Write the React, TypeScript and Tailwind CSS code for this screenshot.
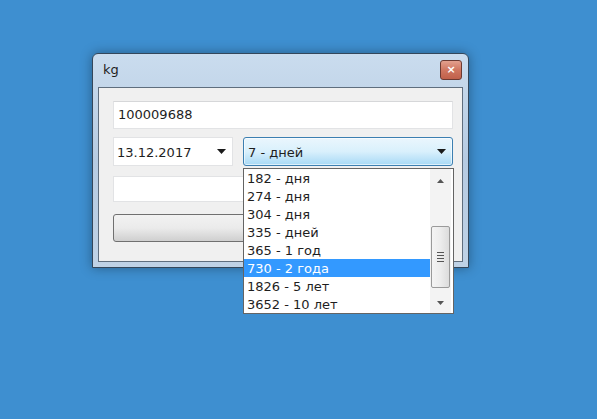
import React from 'react';

const items = [
  '182 - дня',
  '274 - дня',
  '304 - дня',
  '335 - дней',
  '365 - 1 год',
  '730 - 2 года',
  '1826 - 5 лет',
  '3652 - 10 лет',
];

function Arrow() {
  return (
    <svg width="9" height="5" viewBox="0 0 9 5">
      <path d="M0 0 L9 0 L4.5 5 Z" fill="#1a1a1a" />
    </svg>
  );
}

export default function App() {
  return (
    <div
      className="w-[597px] h-[419px] bg-[#3e8fd0] pt-[53px] pl-[92px] overflow-hidden"
      style={{ fontFamily: '"DejaVu Sans", "Noto Sans", sans-serif' }}
    >
      <div className="relative w-[377px] h-[215px] rounded-t-[6px] border border-[#34475b] bg-gradient-to-b from-[#cadcee] via-[#b6cbe2] to-[#bfd2e6] flex flex-col px-[5px] pb-[5px] shadow-[0_0_12px_rgba(0,0,0,0.35)]">
        {/* title bar */}
        <div className="h-[33px] flex items-center justify-between pl-[5px] pr-[1px]">
          <span className="text-[13px] text-[#1e1e1e] -mt-[2px]">kg</span>
          <div className="w-[22px] h-[20px] -mt-[2px] rounded-[3px] border border-[#6b3a32] bg-gradient-to-b from-[#e3a08e] via-[#cf7660] to-[#c0604a] flex items-center justify-center">
            <span className="text-[11px] font-bold text-white leading-none">×</span>
          </div>
        </div>
        {/* client area */}
        <div className="flex-1 border border-[#5f6e7e] bg-[#f0f0f0] pl-[14px] pr-[9px] pt-[13px] flex flex-col">
          <div className="h-[28px] bg-white border border-[#e2e3e5] border-t-[#d6d7d9] flex items-center pl-[4px] text-[13px] text-[#1e1e1e]">
            100009688
          </div>
          <div className="mt-[8px] flex gap-[10px]">
            <div className="w-[120px] h-[29px] bg-white border border-[#e2e3e5] flex items-center justify-between pl-[3px] pr-[6px] text-[13px] text-[#1e1e1e]">
              <span className="mt-[2px]">13.12.2017</span>
              <Arrow />
            </div>
            <div className="flex-1 h-[29px] rounded-[3px] border border-[#3c7fb1] bg-gradient-to-b from-[#eaf6fd] via-[#d9f0fc] to-[#a7d9f5] flex items-center justify-between pl-[4px] pr-[6px] text-[13px] text-[#1e1e1e] shadow-[inset_0_0_0_1px_rgba(255,255,255,0.6)]">
              <span className="mt-[2px]">7 - дней</span>
              <Arrow />
            </div>
          </div>
          <div className="mt-[10px] h-[26px] bg-white border border-[#e2e3e5]" />
          <div className="mt-[12px] h-[28px] rounded-[3px] border border-[#707070] bg-gradient-to-b from-[#f2f2f2] via-[#ebebeb] to-[#cfcfcf]" />
        </div>

        {/* dropdown list */}
        <div className="absolute left-[150px] top-[114px] w-[211px] h-[146px] bg-white border border-[#646464] flex pr-[2px]">
          <div className="flex-1 flex flex-col">
            {items.map((t) => (
              <div
                key={t}
                className={`h-[18px] flex items-center pl-[3px] text-[13px] leading-none ${
                  t === '730 - 2 года' ? 'bg-[#3399ff] text-white' : 'text-[#1e1e1e]'
                }`}
              >
                {t}
              </div>
            ))}
          </div>
          <div className="w-[21px] bg-[#f3f3f3] flex flex-col items-center">
            <div className="h-[24px] flex items-center justify-center">
              <svg width="7" height="4" viewBox="0 0 7 4">
                <path d="M0 4 L7 4 L3.5 0 Z" fill="#555" />
              </svg>
            </div>
            <div className="flex-1 w-full relative">
              <div className="absolute left-[1px] right-[1px] top-[33px] h-[62px] rounded-[2px] border border-[#9a9a9a] bg-gradient-to-r from-[#f4f4f4] via-[#ececec] to-[#dcdcdc] flex flex-col items-center justify-center gap-[2px]">
                <div className="w-[7px] h-[1px] bg-[#555]" />
                <div className="w-[7px] h-[1px] bg-[#555]" />
                <div className="w-[7px] h-[1px] bg-[#555]" />
                <div className="w-[7px] h-[1px] bg-[#555]" />
              </div>
            </div>
            <div className="h-[20px] flex items-center justify-center">
              <svg width="7" height="4" viewBox="0 0 7 4">
                <path d="M0 0 L7 0 L3.5 4 Z" fill="#555" />
              </svg>
            </div>
          </div>
        </div>
      </div>
    </div>
  );
}
